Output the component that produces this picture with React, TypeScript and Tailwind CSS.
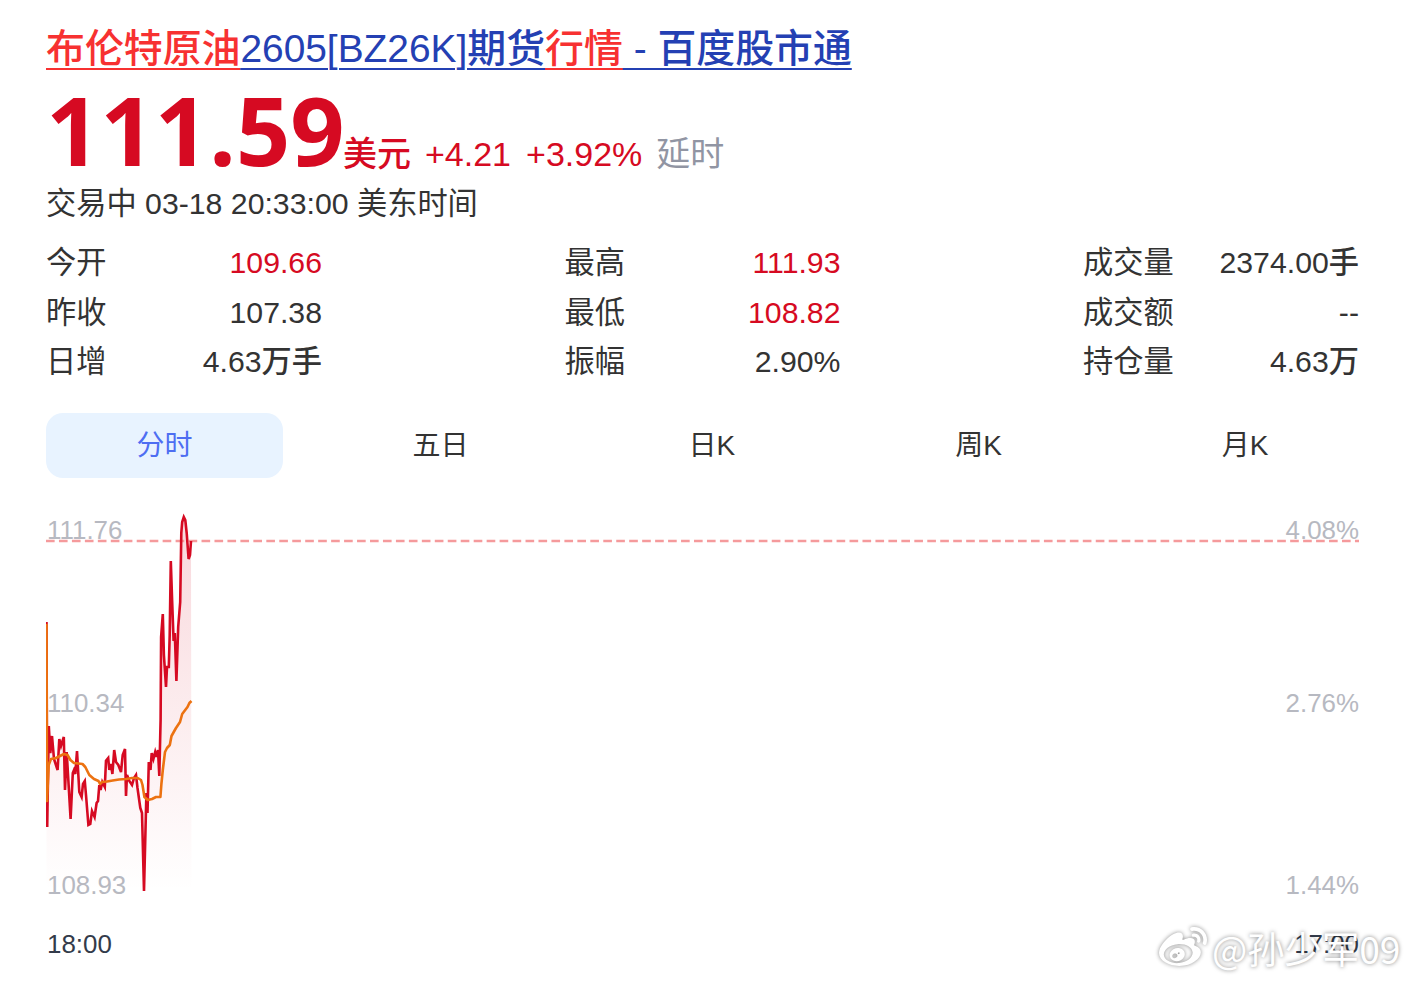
import { FaWeibo } from 'react-icons/fa';

interface Quote {
  label: string;
  value: string;
  up?: boolean;
}

const quoteColumns: Quote[][] = [
  [
    { label: '今开', value: '109.66', up: true },
    { label: '昨收', value: '107.38' },
    { label: '日增', value: '4.63万手' },
  ],
  [
    { label: '最高', value: '111.93', up: true },
    { label: '最低', value: '108.82', up: true },
    { label: '振幅', value: '2.90%' },
  ],
  [
    { label: '成交量', value: '2374.00手' },
    { label: '成交额', value: '--' },
    { label: '持仓量', value: '4.63万' },
  ],
];

const tabs = ['分时', '五日', '日K', '周K', '月K'];

// Chart points share the svg viewBox, which starts at (46, 510)
const pricePoints =
  '46.5,622 47.2,827 48.8,726 50.3,753 52,736 54,759 55,762 57.6,770 59.3,739 61,746 63.8,737 65,790 66.7,752 70.6,819 72.8,773 74,770 75.3,774 77,751 79.3,792 81.6,797 83,784 84.8,781 86,795 88.4,825 90.3,824 92,811 94.6,817 96.6,803 98,801 99.3,785 100.6,790 102.3,782 104.8,787 106,760.7 108.2,758 109.3,770 111,764 112.4,774 114.2,750 116,762 118.3,765 121,772 122.7,755 125,749 126,796 127,775 129.3,781 132,785 134,778 136,775 137.5,788 140.3,808 142,813 144,891 146.4,793 147.5,813 148.8,762 150.5,770 151.7,753 153.4,759 155.2,752 156.5,757 158,750 159.3,776 160.6,720 161.1,637 162.8,614 163.9,655 166,687 167,667 168.8,667 169.7,635 170.8,561 172.1,600 173.6,641 174.8,633 176.4,681 178.2,627 180.2,602 181.3,533 182.2,522 183.8,517 185.3,520 186.7,533 188.6,559 190,555 191,541';

const averagePoints =
  '46.5,624 47,801 48.7,765 51,759 56,758 60,756 64,754 67.5,755 70.4,760 74,763 82.5,764 85.3,767 89.3,775 94,779 98.5,781 100,784 102,782 107,781.5 112.7,780.5 119,779.5 126,779 132,778 137.7,778 141,780 142.5,785 144.4,797 147.7,800 152,799 156,797 160.4,797 161.4,784 162.8,770 165,752 167,748 169.8,745 171.5,736 176,728 180,722 182.2,714 187.5,707 189.4,703 191.5,701';

function QuoteGrid() {
  return (
    <div className="mt-[12px] flex justify-between text-[30.24px] leading-[49.6px] text-[#333]">
      {quoteColumns.map((column) => (
        <div key={column[0].label} className="w-[276px]">
          {column.map((quote) => (
            <div key={quote.label} className="flex justify-between">
              <span>{quote.label}</span>
              <span className={quote.up ? 'font-medium text-[#d60a22]' : 'font-medium'}>{quote.value}</span>
            </div>
          ))}
        </div>
      ))}
    </div>
  );
}

function Tabs() {
  return (
    <div className="mt-[26px] flex justify-between text-[28px] leading-[65px] text-[#333]">
      {tabs.map((tab, i) => (
        <button
          key={tab}
          className={`h-[65px] rounded-[17px] px-[90.5px] ${i === 0 ? 'bg-[#e8f3ff] text-[#4e6ef2]' : ''}`}
        >
          {tab}
        </button>
      ))}
    </div>
  );
}

function MinuteChart() {
  return (
    <div className="relative mt-[32px] h-[390px] text-[25.92px] leading-[40px] text-[#b7b9c1]">
      <div className="flex h-full flex-col pl-px">
        <div className="flex justify-between">
          <span>111.76</span>
          <span>4.08%</span>
        </div>
        <div className="mt-[133px] flex justify-between">
          <span>110.34</span>
          <span>2.76%</span>
        </div>
        <div className="mt-[142px] flex justify-between">
          <span>108.93</span>
          <span>1.44%</span>
        </div>
      </div>
      <svg className="absolute inset-0 h-[390px] w-[1313px]" viewBox="46 510 1313 390" fill="none">
        <defs>
          <linearGradient id="area" x1="0" y1="517" x2="0" y2="892" gradientUnits="userSpaceOnUse">
            <stop offset="0" stopColor="#d60a22" stopOpacity="0.16" />
            <stop offset="1" stopColor="#d60a22" stopOpacity="0" />
          </linearGradient>
        </defs>
        <polygon points={`46.5,892 ${pricePoints} 191.5,892`} fill="url(#area)" />
        <line x1="46" y1="541" x2="1359" y2="541" stroke="#f59a9c" strokeWidth="2.6" strokeDasharray="8.64 4.32" />
        <polyline points={pricePoints} stroke="#d60a22" strokeWidth="2.6" />
        <polyline points={averagePoints} stroke="#ec7211" strokeWidth="2.6" strokeLinejoin="round" />
      </svg>
    </div>
  );
}

export default function App() {
  return (
    <div className="relative h-[982px] w-[1414px] overflow-hidden bg-white pt-[20px] pr-[55px] pl-[46px] font-['Liberation_Sans','Noto_Sans_CJK_SC',sans-serif]">
      <h3 className="text-[38.88px] leading-[57px] font-medium whitespace-nowrap text-[#2440b3]">
        <a className="underline decoration-2 underline-offset-[6px]">
          <em className="text-[#f73131] not-italic underline decoration-2 underline-offset-[6px]">布伦特原油</em>
          2605[BZ26K]期货
          <em className="text-[#f73131] not-italic underline decoration-2 underline-offset-[6px]">行情</em>
          {' - 百度股市通'}
        </a>
      </h3>

      <div className="flex h-[104px] items-baseline text-[34px] leading-[104px] whitespace-nowrap text-[#d60a22]">
        <span className="w-[297px] font-['Open_Sans'] text-[95px] font-bold">111.59</span>
        <span className="font-medium">美元</span>
        <span className="ml-[14px]">+4.21</span>
        <span className="ml-[15px]">+3.92%</span>
        <span className="ml-[14px] text-[#9195a3]">延时</span>
      </div>

      <div className="text-[30.24px] leading-[45px] text-[#333]">交易中 03-18 20:33:00 美东时间</div>

      <QuoteGrid />
      <Tabs />
      <MinuteChart />

      <div className="mt-[24px] flex justify-between pl-px text-[25.92px] leading-[40px] text-[#333b4a]">
        <span>18:00</span>
        <span>17:00</span>
      </div>

      <div className="absolute top-[921px] left-[1159px] flex items-center text-white">
        <FaWeibo className="h-[48px] w-[48px] drop-shadow-[0_0_2px_rgba(0,0,0,0.45)]" />
        <span className="ml-[5px] font-['Noto_Sans_CJK_SC',sans-serif] text-[37.3px] leading-[54px] [text-shadow:0_0_4px_rgba(0,0,0,0.5)]">
          @孙少军09
        </span>
      </div>
    </div>
  );
}
